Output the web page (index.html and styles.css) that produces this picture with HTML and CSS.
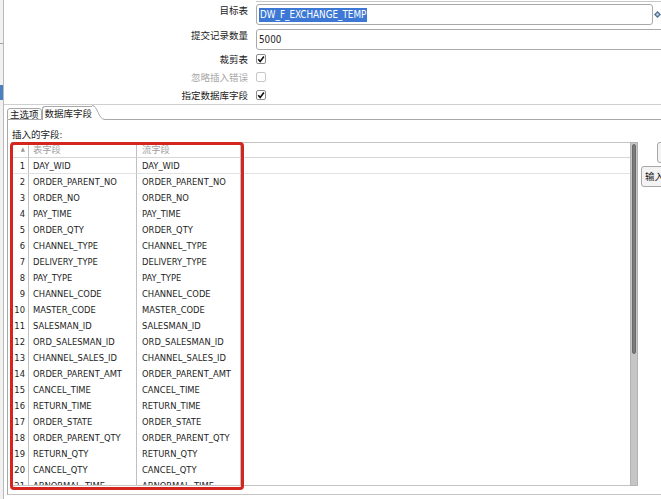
FILE: index.html
```html
<!DOCTYPE html>
<html lang="zh">
<head>
<meta charset="utf-8">
<title>表输出</title>
<link rel="stylesheet" href="styles.css">
</head>
<body>
<div class="window">
  <div class="edge"><span class="edge-tick"></span><span class="edge-blue"></span></div>
  <div class="main">
    <div class="prev-line"></div>
    <div class="form">
      <div class="lbl">目标表</div>
      <div class="ctrl">
        <div class="input w1"><span class="sel">DW_F_EXCHANGE_TEMP</span></div>
        <svg class="diamond" width="7" height="7" viewBox="0 0 7 7"><polygon points="3.5,0 7,3.5 3.5,7 0,3.5" fill="#4f6f96"/><circle cx="3.5" cy="3.5" r="1.3" fill="#c9d6e6"/></svg>
      </div>
      <div class="lbl">提交记录数量</div>
      <div class="ctrl"><div class="input w2">5000</div></div>
      <div class="lbl cbl">裁剪表</div>
      <div class="ctrl cbr"><span class="cb"><svg width="10" height="10" viewBox="0 0 10 10"><path d="M2.2 5.2 L4.2 7.4 L7.9 2.6" fill="none" stroke="#111" stroke-width="1.6"/></svg></span></div>
      <div class="lbl cbl dis">忽略插入错误</div>
      <div class="ctrl cbr"><span class="cb off"></span></div>
      <div class="lbl cbl">指定数据库字段</div>
      <div class="ctrl cbr"><span class="cb"><svg width="10" height="10" viewBox="0 0 10 10"><path d="M2.2 5.2 L4.2 7.4 L7.9 2.6" fill="none" stroke="#111" stroke-width="1.6"/></svg></span></div>
    </div>
    <div class="tabs">
      <div class="tab">主选项</div>
      <div class="tab active">数据库字段</div>
      <svg class="tab-curve" width="13" height="15" viewBox="0 0 13 15"><path d="M0 0.5 C6 0.5 6 14.5 13 14.5" fill="none" stroke="#a8a8a8" stroke-width="1"/></svg>
      <div class="tab-fill"></div>
    </div>
    <div class="panel">
      <div class="ins-label">插入的字段:</div>
      <div class="table-row">
        <div class="tablewrap">
          <div class="grid">
            <div class="c hd num"><span class="arrow">▲</span></div>
            <div class="c hd">表字段</div>
            <div class="c hd c2">流字段</div>
            <div class="c hd fill"></div>

            <div class="c num r1">1</div><div class="c r1">DAY_WID</div><div class="c c2 r1">DAY_WID</div><div class="c fill r1"></div>
            <div class="c num">2</div><div class="c">ORDER_PARENT_NO</div><div class="c c2">ORDER_PARENT_NO</div><div class="c fill"></div>
            <div class="c num">3</div><div class="c">ORDER_NO</div><div class="c c2">ORDER_NO</div><div class="c fill"></div>
            <div class="c num">4</div><div class="c">PAY_TIME</div><div class="c c2">PAY_TIME</div><div class="c fill"></div>
            <div class="c num">5</div><div class="c">ORDER_QTY</div><div class="c c2">ORDER_QTY</div><div class="c fill"></div>
            <div class="c num">6</div><div class="c">CHANNEL_TYPE</div><div class="c c2">CHANNEL_TYPE</div><div class="c fill"></div>
            <div class="c num">7</div><div class="c">DELIVERY_TYPE</div><div class="c c2">DELIVERY_TYPE</div><div class="c fill"></div>
            <div class="c num">8</div><div class="c">PAY_TYPE</div><div class="c c2">PAY_TYPE</div><div class="c fill"></div>
            <div class="c num">9</div><div class="c">CHANNEL_CODE</div><div class="c c2">CHANNEL_CODE</div><div class="c fill"></div>
            <div class="c num">10</div><div class="c">MASTER_CODE</div><div class="c c2">MASTER_CODE</div><div class="c fill"></div>
            <div class="c num">11</div><div class="c">SALESMAN_ID</div><div class="c c2">SALESMAN_ID</div><div class="c fill"></div>
            <div class="c num">12</div><div class="c">ORD_SALESMAN_ID</div><div class="c c2">ORD_SALESMAN_ID</div><div class="c fill"></div>
            <div class="c num">13</div><div class="c">CHANNEL_SALES_ID</div><div class="c c2">CHANNEL_SALES_ID</div><div class="c fill"></div>
            <div class="c num">14</div><div class="c">ORDER_PARENT_AMT</div><div class="c c2">ORDER_PARENT_AMT</div><div class="c fill"></div>
            <div class="c num">15</div><div class="c">CANCEL_TIME</div><div class="c c2">CANCEL_TIME</div><div class="c fill"></div>
            <div class="c num">16</div><div class="c">RETURN_TIME</div><div class="c c2">RETURN_TIME</div><div class="c fill"></div>
            <div class="c num">17</div><div class="c">ORDER_STATE</div><div class="c c2">ORDER_STATE</div><div class="c fill"></div>
            <div class="c num">18</div><div class="c">ORDER_PARENT_QTY</div><div class="c c2">ORDER_PARENT_QTY</div><div class="c fill"></div>
            <div class="c num">19</div><div class="c">RETURN_QTY</div><div class="c c2">RETURN_QTY</div><div class="c fill"></div>
            <div class="c num">20</div><div class="c">CANCEL_QTY</div><div class="c c2">CANCEL_QTY</div><div class="c fill"></div>
            <div class="c num">21</div><div class="c">ABNORMAL_TIME</div><div class="c c2">ABNORMAL_TIME</div><div class="c fill"></div>
          </div>
          <div class="redbox"></div>
        </div>
        <div class="scrollbar"><div class="thumb"></div></div>
        <div class="side">
          <div class="btn b1"></div>
          <div class="btn b2">输入字段映射</div>
        </div>
      </div>
    </div>
  </div>
</div>
</body>
</html>
```

FILE: styles.css
```css
* { box-sizing: border-box; }
html, body { margin: 0; padding: 0; }
body {
  width: 661px;
  height: 499px;
  overflow: hidden;
  background: #ffffff;
  font-family: "DejaVu Sans Condensed", "DejaVu Sans", "Noto Sans CJK SC", sans-serif;
  font-stretch: condensed;
  font-size: 9.5px;
  color: #1c1c1c;
}
.window {
  display: flex;
  width: 661px;
  height: 499px;
}
.edge {
  width: 4px;
  flex: none;
  position: relative;
  background: #f1f1f1;
  border-right: 1px solid #b9b9b9;
}
.edge-tick {
  position: absolute;
  left: 0;
  top: 38px;
  width: 3px;
  height: 6px;
  border-bottom: 1px solid #a0a0a0;
}
.edge-blue {
  position: absolute;
  left: 0;
  top: 85px;
  width: 3px;
  height: 15px;
  background: #4a7fc0;
}
.main {
  flex: 1;
  min-width: 0;
  padding-left: 3px;
  display: flex;
  flex-direction: column;
}
.prev-line {
  height: 2px;
  margin-left: 249px;
  border-bottom: 1px solid #c8c8c8;
  margin-bottom: 2px;
}
.form {
  display: grid;
  grid-template-columns: 241px 1fr;
  column-gap: 8px;
}
.lbl {
  text-align: right;
  line-height: 13px;
  white-space: nowrap;
  align-self: start;
}
.ctrl {
  display: flex;
  align-items: center;
}
.input {
  height: 21px;
  border: 1px solid #a9a9a9;
  border-radius: 3px;
  padding-left: 2px;
  display: flex;
  align-items: center;
  font-size: 9.8px;
  background: #fff;
  flex: none;
}
.w1 { width: 397px; }
.w2 { width: 420px; margin-top: 4px; }
.sel {
  background: #3c78d4;
  color: #fff;
  padding: 1px 1px;
  line-height: 12px;
}
.diamond { margin-left: 1px; }
.form .lbl:nth-child(3) { margin-top: 4px; }
.cbl { line-height: 17px; padding-top: 1px; }
.cbr { height: 17px; padding-top: 1px; }
.dis { color: #a8a8a8; }
.cb {
  width: 10px;
  height: 10px;
  border: 1px solid #8a8a8a;
  border-radius: 2px;
  background: #fff;
  display: flex;
  align-items: center;
  justify-content: center;
}
.cb svg { flex: none; }
.cb.off { border-color: #c8c8c8; }
.tabs {
  height: 16px;
  border-top: 1px solid #cfcfcf;
  display: flex;
  align-items: flex-end;
  margin-left: -7px;
  padding-left: 7px;
}
.tab {
  height: 12px;
  line-height: 11px;
  padding: 0 2px;
  border: 1px solid #a8a8a8;
  border-radius: 3px 3px 0 0;
  white-space: nowrap;
  background: #fbfbfb;
}
.tab.active {
  height: 14px;
  line-height: 13px;
  border-right: none;
  border-bottom: none;
  border-radius: 3px 0 0 0;
  background: #fff;
  padding-right: 0;
}
.tab-curve { flex: none; display: block; }
.tab-fill {
  flex: 1;
  border-bottom: 1px solid #a8a8a8;
}
.panel {
  height: 375px;
  border-left: 1px solid #a8a8a8;
  border-bottom: 1px solid #c4c4c4;
  padding-top: 5px;
}
.ins-label {
  line-height: 15px;
  padding-top: 2px;
  padding-left: 4px;
}
.table-row {
  display: flex;
  padding-left: 3px;
}
.tablewrap {
  position: relative;
  width: 619px;
  flex: none;
}
.grid {
  display: grid;
  grid-template-columns: 17px 108px 104px 1fr;
  grid-auto-rows: 16px;
  grid-template-rows: 15px;
  height: 344px;
  overflow: hidden;
  border: 1px solid #c4c4c4;
  border-right: none;
  font-size: 9.3px;
}
.c {
  border-right: 1px solid #c0c0c0;
  padding-left: 4px;
  line-height: 16px;
  white-space: nowrap;
  overflow: hidden;
}
.c.c2 { padding-left: 5px; }
.c.num {
  text-align: right;
  padding: 0 3px 0 0;
}
.c.fill { border-right: none; }
.c.hd {
  color: #a0a0a0;
  line-height: 13px;
  border-bottom: 1px solid #d6d6d6;
}
.c.r1 { border-bottom: 1px solid #e2e2e2; line-height: 15px; }
.arrow {
  font-size: 6px;
  color: #9a9a9a;
  display: inline-block;
  transform: translate(0px, -2px);
}
.redbox {
  position: absolute;
  left: -1px;
  top: 0;
  width: 234px;
  height: 348px;
  border: 3px solid #d4261f;
  border-radius: 4px;
}
.scrollbar {
  width: 8px;
  height: 344px;
  flex: none;
  background: #c6c6c6;
  border: 1px solid #b4b4b4;
  padding: 1px 1px;
}
.thumb {
  width: 4px;
  height: 210px;
  background: #7b7b7b;
  border-radius: 2px;
  border: 1px solid #6a6a6a;
}
.side {
  flex: 1;
  min-width: 0;
  overflow: hidden;
  position: relative;
}
.btn {
  height: 21px;
  border: 1px solid #a8a8a8;
  border-radius: 3px;
  background: #f3f3f3;
  white-space: nowrap;
  line-height: 19px;
  padding-left: 3px;
}
.b1 { margin-left: 19px; width: 40px; }
.b2 { margin-left: 3px; margin-top: 3px; width: 60px; }
```
